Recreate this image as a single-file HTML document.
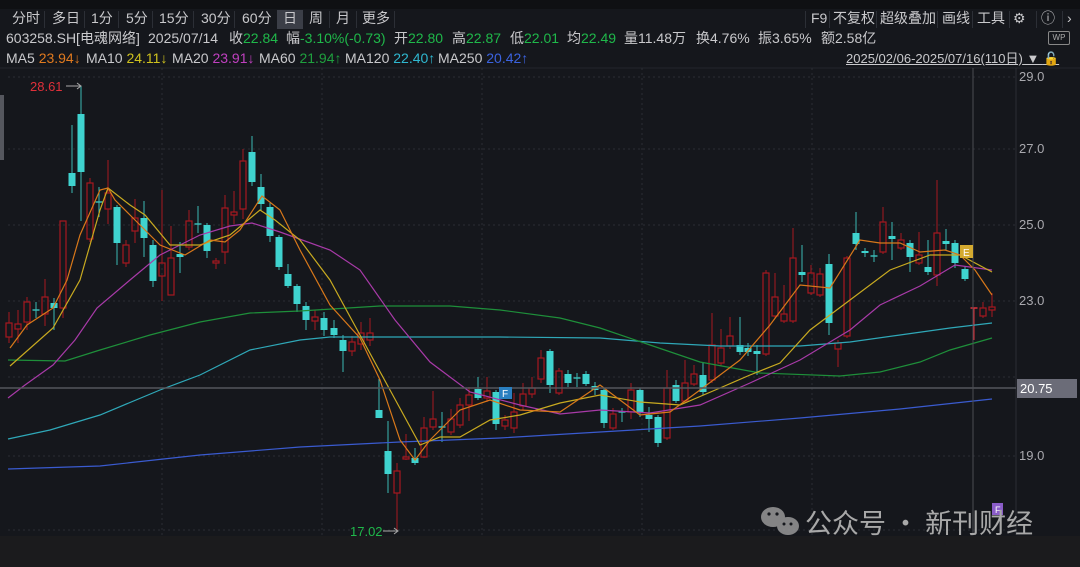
<!DOCTYPE html>
<html><head><meta charset="utf-8">
<style>
*{margin:0;padding:0;box-sizing:border-box}
body{width:1080px;height:567px;background:#15171c;overflow:hidden;font-family:"Liberation Sans","Noto Sans CJK SC",sans-serif;color:#c9c9cc;position:relative}
.top{position:absolute;left:0;top:0;width:1080px;height:9px;background:#0f1013}
.t{position:absolute;white-space:nowrap;font-size:14px;line-height:17px}
.r1{top:10px}.r2{top:30px}.r3{top:50px}
.sep{position:absolute;top:11px;width:1px;height:17px;background:#2c2f36}
.g{color:#1fb84a}.o{color:#e07a1f}.y{color:#cfc21e}.p{color:#c040c0}.gr{color:#1fa03e}.c{color:#2fb8d0}.b{color:#3b63e0}
.ax{position:absolute;left:1019px;font-size:13px;color:#a9a9ae}
.bot{position:absolute;left:0;top:536px;width:1080px;height:31px;background:#1b1b1d}
</style></head><body>
<div class="top"></div>
<div style="position:absolute;left:277px;top:10px;width:26px;height:19px;background:#3b3e47"></div>
<div class="t r1" style="left:12px">分时</div><div class="sep" style="left:44px"></div>
<div class="t r1" style="left:52px">多日</div><div class="sep" style="left:84px"></div>
<div class="t r1" style="left:91px">1分</div><div class="sep" style="left:118px"></div>
<div class="t r1" style="left:126px">5分</div><div class="sep" style="left:152px"></div>
<div class="t r1" style="left:159px">15分</div><div class="sep" style="left:193px"></div>
<div class="t r1" style="left:201px">30分</div><div class="sep" style="left:234px"></div>
<div class="t r1" style="left:242px">60分</div>
<div class="t r1" style="left:283px">日</div>
<div class="t r1" style="left:309px">周</div><div class="sep" style="left:329px"></div>
<div class="t r1" style="left:336px">月</div><div class="sep" style="left:356px"></div>
<div class="t r1" style="left:362px">更多</div><div class="sep" style="left:394px"></div>
<div class="sep" style="left:805px"></div><div class="t r1" style="left:811px">F9</div>
<div class="sep" style="left:829px"></div><div class="t r1" style="left:833px">不复权</div>
<div class="sep" style="left:876px"></div><div class="t r1" style="left:880px">超级叠加</div>
<div class="sep" style="left:937px"></div><div class="t r1" style="left:942px">画线</div>
<div class="sep" style="left:972px"></div><div class="t r1" style="left:977px">工具</div>
<div class="sep" style="left:1009px"></div><div class="t r1" style="left:1013px">⚙</div>
<div class="sep" style="left:1036px"></div><div class="t r1" style="left:1041px">ⓘ</div>
<div class="sep" style="left:1062px"></div><div class="t r1" style="left:1067px">›</div>
<div class="t r2" style="left:6px">603258.SH[电魂网络]</div>
<div class="t r2" style="left:148px">2025/07/14</div>
<div class="t r2" style="left:229px">收<span class="g">22.84</span></div>
<div class="t r2" style="left:286px">幅<span class="g">-3.10%(-0.73)</span></div>
<div class="t r2" style="left:394px">开<span class="g">22.80</span></div>
<div class="t r2" style="left:452px">高<span class="g">22.87</span></div>
<div class="t r2" style="left:510px">低<span class="g">22.01</span></div>
<div class="t r2" style="left:567px">均<span class="g">22.49</span></div>
<div class="t r2" style="left:624px">量11.48万</div>
<div class="t r2" style="left:696px">换4.76%</div>
<div class="t r2" style="left:758px">振3.65%</div>
<div class="t r2" style="left:821px">额2.58亿</div>
<div class="t r3" style="left:6px">MA5 <span class="o">23.94↓</span></div>
<div class="t r3" style="left:86px">MA10 <span class="y">24.11↓</span></div>
<div class="t r3" style="left:172px">MA20 <span class="p">23.91↓</span></div>
<div class="t r3" style="left:259px">MA60 <span class="gr">21.94↑</span></div>
<div class="t r3" style="left:345px">MA120 <span class="c">22.40↑</span></div>
<div class="t r3" style="left:438px">MA250 <span class="b">20.42↑</span></div>
<div class="t r3" style="left:846px;font-size:13px;text-decoration:underline">2025/02/06-2025/07/16(110日)<span style="text-decoration:none"> ▼ <span style="color:#e0a020">🔓</span></span></div>
<div style="position:absolute;left:1048px;top:31px;width:22px;height:14px;border:1px solid #888;border-radius:2px;font-size:8px;line-height:12px;text-align:center;color:#aaa">WP</div>
<svg id="ch" width="1080" height="567" style="position:absolute;left:0;top:0" xmlns="http://www.w3.org/2000/svg">
<line x1="0" y1="68" x2="1080" y2="68" stroke="#24262c"/>
<rect x="0" y="95" width="4" height="65" fill="#55575e"/>
<g stroke="#2a2d33" stroke-dasharray="2,3">
<line x1="8" y1="77" x2="1015" y2="77"/><line x1="8" y1="149" x2="1015" y2="149"/><line x1="8" y1="225" x2="1015" y2="225"/><line x1="8" y1="301" x2="1015" y2="301"/><line x1="8" y1="377" x2="1015" y2="377"/><line x1="8" y1="456" x2="1015" y2="456"/><line x1="8" y1="530" x2="1015" y2="530"/>
<line x1="162" y1="68" x2="162" y2="535"/><line x1="322" y1="68" x2="322" y2="535"/><line x1="482" y1="68" x2="482" y2="535"/><line x1="642" y1="68" x2="642" y2="535"/><line x1="812" y1="68" x2="812" y2="535"/>
</g>
<line x1="1016" y1="68" x2="1016" y2="535" stroke="#2a2d33"/>
<g id="cd"></g>
<g fill="none" stroke-width="1.2">
<polyline stroke="#3a5bd0" points="8,469 100,466 200,455 300,447 400,442 500,438 600,432 700,426 800,418 900,409 992,399"/>
<polyline stroke="#2fa8b8" points="8,439 50,430 100,415 160,390 200,375 250,350 300,340 330,337 400,337 500,337 600,338 660,343 720,346 800,346 850,342 900,335 950,328 992,323"/>
<polyline stroke="#1e8f3a" points="8,360 65,361 100,350 150,335 200,322 250,313 300,311 380,306 450,306 500,310 560,318 600,328 650,345 700,362 760,373 840,376 880,372 920,362 950,350 992,338"/>
<polyline stroke="#a83aa8" points="8,398 25,385 53,365 75,340 97,308 130,280 160,255 200,235 230,226 252,223 280,232 330,250 360,270 395,320 430,362 470,392 520,405 560,414 600,410 650,413 700,405 750,383 800,360 850,330 880,305 920,286 955,265 992,270"/>
<polyline stroke="#c8aa20" points="10,366 53,328 80,280 100,210 108,188 130,205 145,215 170,245 200,245 230,235 260,210 275,220 300,240 330,280 360,335 390,390 420,445 440,437 460,437 490,420 520,415 560,403 600,395 640,402 680,405 720,388 750,375 780,363 810,330 850,300 890,270 930,255 960,255 992,272"/>
<polyline stroke="#d8781a" points="10,348 27,325 53,308 67,280 80,235 100,190 108,188 115,200 130,215 160,245 185,255 210,240 225,242 240,230 262,196 280,210 300,250 330,305 360,338 380,380 400,440 415,460 430,440 460,410 490,400 520,410 560,412 600,385 640,415 670,412 700,390 740,360 770,325 800,285 830,288 860,240 880,243 900,243 920,252 945,250 960,255 975,270 992,295"/>
</g>
<line x1="0" y1="388" x2="1016" y2="388" stroke="#55575c" stroke-width="1.5"/>
<line x1="973" y1="68" x2="973" y2="535" stroke="#4a4c52"/>
<text x="30" y="91" fill="#e0303a" font-size="13" font-family="Liberation Sans">28.61</text>
<line x1="66" y1="86" x2="80" y2="86" stroke="#aaa"/><path d="M77,83 L81,86 L77,89" stroke="#aaa" fill="none"/>
<text x="350" y="536" fill="#1fb84a" font-size="13" font-family="Liberation Sans">17.02</text>
<line x1="383" y1="531" x2="397" y2="531" stroke="#aaa"/><path d="M394,528 L398,531 L394,534" stroke="#aaa" fill="none"/>
<rect x="499" y="387" width="13" height="12" fill="#2a7fc0"/><text x="502" y="397" fill="#fff" font-size="10" font-family="Liberation Sans">F</text>
<rect x="960" y="245" width="13" height="13" fill="#d4aa30"/><text x="963" y="256" fill="#fff" font-size="10" font-family="Liberation Sans">E</text>
<rect x="992" y="503" width="11" height="12" fill="#8a5cc8"/><text x="995" y="513" fill="#fff" font-size="9" font-family="Liberation Sans">F</text>
<rect x="1017" y="379" width="60" height="19" fill="#6b6c78"/>
<text x="1020" y="393" fill="#fff" font-size="13" font-family="Liberation Sans">20.75</text>
<g fill="#a0a0a0" opacity="0.8">
<ellipse cx="773" cy="517" rx="12" ry="10"/><ellipse cx="788" cy="526" rx="11" ry="9"/>
</g>
<g fill="#15171c"><circle cx="769" cy="514" r="1.6"/><circle cx="777" cy="514" r="1.6"/><circle cx="784" cy="524" r="1.5"/><circle cx="791" cy="524" r="1.5"/></g>
<text x="805" y="533" fill="#a8a8a8" font-size="27" font-family="Noto Sans CJK SC,sans-serif">公众号 · 新刊财经</text>
</svg>
<div class="ax" style="top:69px">29.0</div>
<div class="ax" style="top:141px">27.0</div>
<div class="ax" style="top:217px">25.0</div>
<div class="ax" style="top:293px">23.0</div>
<div class="ax" style="top:448px">19.0</div>
<div class="bot"></div>
<script>
var D=[
[9,'u',323,337,312,343],[18,'u',324,329,310,343],[27,'u',302,322,297,330],[36,'x',310,310,302,318],[45,'u',297,314,279,326],[54,'d',303,308,298,330],[63,'u',221,308,221,318],
[72,'d',173,186,125,193],[81,'d',114,172,86,221],[90,'u',183,239,178,242],[99,'x',202,202,187,217],[108,'u',193,209,160,224],[117,'d',207,243,205,265],[126,'u',245,263,240,267],[135,'u',218,231,199,243],[144,'d',218,238,201,257],[153,'d',245,281,240,287],[162,'u',263,276,190,301],[171,'u',258,295,226,295],[180,'d',254,257,242,273],[189,'u',221,247,210,250],[198,'x',224,224,206,233],[207,'d',225,251,223,258],[216,'u',261,263,258,269],[225,'u',208,252,195,264],[234,'u',212,215,191,224],[243,'u',161,209,149,219],[252,'d',152,182,136,186],[261,'d',187,204,174,211],[270,'d',207,236,203,242],[279,'d',237,267,235,270],[288,'d',274,286,264,288],[297,'d',286,304,284,312],[306,'d',306,320,302,330],[315,'u',317,321,310,330],
[324,'d',318,330,312,336],[334,'d',328,335,320,338],[343,'d',340,351,335,372],[352,'u',342,351,336,356],[361,'u',333,344,322,350],[370,'u',333,340,318,346],[379,'d',410,418,379,418],[388,'d',451,474,421,493],[397,'u',471,493,463,531],[406,'u',457,459,434,460],[415,'d',458,463,448,465],[424,'u',428,457,417,458],[433,'u',419,427,391,430],[442,'x',427,427,412,442],[451,'u',419,432,409,435],[460,'u',405,425,398,428],[469,'u',395,405,387,421],[478,'d',389,398,377,400],[487,'u',391,398,377,402],[496,'d',392,424,390,430],[505,'u',420,426,415,430],[514,'u',412,428,393,433],[523,'u',394,406,383,410],[532,'u',388,394,377,398],[541,'u',358,379,350,383],[550,'d',351,385,349,393],[559,'u',371,393,368,395],[568,'d',374,383,370,387],[577,'x',378,378,373,387],[586,'d',374,384,371,386],[595,'d',386,390,382,395],[604,'d',390,423,388,428],[613,'u',414,428,408,430],[622,'x',412,412,408,422],[631,'u',390,412,383,419],[640,'d',390,413,388,417],[649,'d',415,419,407,432],[658,'d',417,443,415,447],[667,'u',388,438,370,440],[676,'d',385,401,380,403],[685,'u',383,401,360,403],[694,'u',374,384,365,386],[703,'d',375,392,363,395],[712,'u',345,380,313,383],[721,'u',348,363,329,366],[730,'u',336,346,317,349],[740,'d',345,352,317,355],[748,'d',348,352,343,356],[757,'d',351,354,345,375],[766,'u',273,354,270,356],[775,'u',297,316,273,318],[784,'u',314,321,285,323],[793,'u',258,321,228,323],[802,'d',272,275,245,282],[811,'u',273,293,265,295],[820,'u',274,295,268,297],[829,'d',264,323,254,335],[838,'u',343,349,340,367],[847,'u',258,336,256,338],[856,'d',233,244,212,250],[865,'d',251,253,248,257],[874,'x',256,256,250,262],[883,'u',222,252,207,254],[892,'d',236,239,222,260],[901,'u',240,248,233,250],[910,'d',243,257,240,272],[919,'u',255,263,232,265],[928,'d',267,272,240,275],[937,'u',233,275,180,286],[946,'d',241,244,229,250],[955,'d',243,263,240,268],[965,'d',269,279,266,281],[974,'r',308,308,308,340],[983,'u',308,316,302,318],[992,'u',307,310,293,317]];
var s='';
D.forEach(function(c){var x=c[0],t=c[1],b1=c[2],b2=c[3],w1=c[4],w2=c[5];
var col=(t=='d')?'#3fd3cf':(t=='r'?'#e0303a':'#a8181f');
if(t=='d'){s+='<line x1="'+x+'" y1="'+w1+'" x2="'+x+'" y2="'+w2+'" stroke="#3ab8b4"/>';s+='<rect x="'+(x-3.5)+'" y="'+b1+'" width="7" height="'+Math.max(b2-b1,2)+'" fill="'+col+'"/>';}
else if(t=='x'||t=='r'){s+='<line x1="'+x+'" y1="'+w1+'" x2="'+x+'" y2="'+w2+'" stroke="'+(t=='x'?'#3ab8b4':col)+'"/><line x1="'+(x-3.5)+'" y1="'+b1+'" x2="'+(x+3.5)+'" y2="'+b1+'" stroke="'+(t=='x'?'#3ab8b4':col)+'" stroke-width="1.5"/>';}
else{s+='<line x1="'+x+'" y1="'+w1+'" x2="'+x+'" y2="'+b1+'" stroke="'+col+'"/><line x1="'+x+'" y1="'+b2+'" x2="'+x+'" y2="'+w2+'" stroke="'+col+'"/>';s+='<rect x="'+(x-3)+'" y="'+b1+'" width="6" height="'+Math.max(b2-b1,2)+'" fill="none" stroke="'+col+'" stroke-width="1.2"/>';}
});
document.getElementById('cd').innerHTML=s;
</script>
</body></html>
